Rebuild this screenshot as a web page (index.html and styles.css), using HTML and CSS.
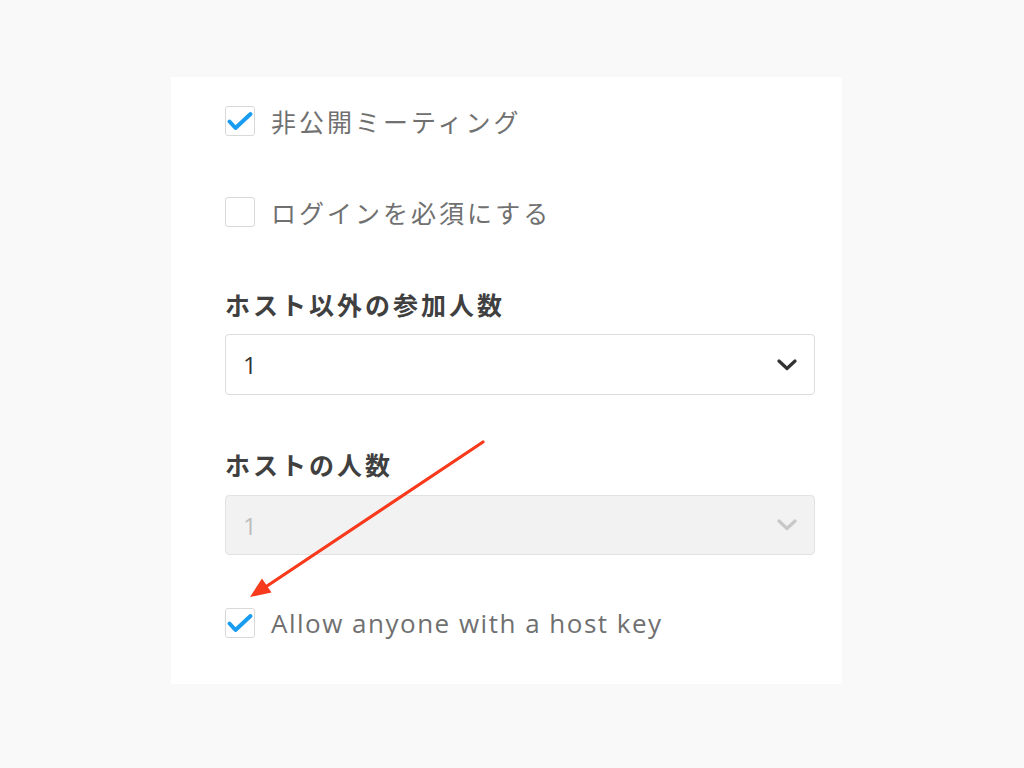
FILE: index.html
```html
<!DOCTYPE html>
<html lang="ja">
<head>
<meta charset="utf-8">
<title>Meeting settings</title>
<link rel="stylesheet" href="styles.css">
</head>
<body>
<div class="page">
  <div class="card">
    <div class="check-row first">
      <span class="box checked">
        <svg viewBox="0 0 30 30" width="30" height="30"><path d="M4.5 15.5 L10.5 22 L25.5 8" fill="none" stroke="#1a9cf0" stroke-width="4" stroke-linecap="round" stroke-linejoin="round"/></svg>
      </span>
      <span class="label">非公開ミーティング</span>
    </div>
    <div class="check-row second">
      <span class="box"></span>
      <span class="label">ログインを必須にする</span>
    </div>
    <div class="field f1">
      <div class="heading">ホスト以外の参加人数</div>
      <div class="select">
        <span class="value">1</span>
        <svg class="chev" viewBox="0 0 22 12" width="22" height="12"><path d="M3 2 L11 9.5 L19 2" fill="none" stroke="#333" stroke-width="3.2" stroke-linecap="round" stroke-linejoin="round"/></svg>
      </div>
    </div>
    <div class="field f2">
      <div class="heading">ホストの人数</div>
      <div class="select disabled">
        <span class="value">1</span>
        <svg class="chev" viewBox="0 0 22 12" width="22" height="12"><path d="M3 2 L11 9.5 L19 2" fill="none" stroke="#c8c8c8" stroke-width="3.2" stroke-linecap="round" stroke-linejoin="round"/></svg>
      </div>
    </div>
    <div class="check-row third">
      <span class="box checked">
        <svg viewBox="0 0 30 30" width="30" height="30"><path d="M4.5 15.5 L10.5 22 L25.5 8" fill="none" stroke="#1a9cf0" stroke-width="4" stroke-linecap="round" stroke-linejoin="round"/></svg>
      </span>
      <span class="label en">Allow anyone with a host key</span>
    </div>
    <svg class="arrow" width="1024" height="768" viewBox="0 0 1024 768">
      <line x1="483" y1="442" x2="264" y2="588" stroke="#f83a1c" stroke-width="3.2" stroke-linecap="round"/>
      <polygon points="250,597 262,578.5 271.5,592.5" fill="#f83a1c"/>
    </svg>
  </div>
</div>
</body>
</html>
```

FILE: styles.css
```css
html, body {
  margin: 0;
  padding: 0;
  background: #f9f9f9;
}
body {
  font-family: "Open Sans", "Noto Sans CJK JP", sans-serif;
}
.page {
  width: 1024px;
  height: 768px;
  padding-top: 77px;
  box-sizing: border-box;
}
.card {
  width: 671px;
  height: 607px;
  margin-left: 171px;
  background: #ffffff;
  box-sizing: border-box;
  padding: 29px 27px 0 54px;
  display: flex;
  flex-direction: column;
}
.check-row {
  display: flex;
  align-items: center;
  height: 30px;
}
.check-row.second { margin-top: 61px; }
.check-row.third { margin-top: 53px; }
.box {
  width: 30px;
  height: 30px;
  box-sizing: border-box;
  border: 1px solid #d9d9d9;
  border-radius: 3px;
  background: #fff;
  flex: none;
  position: relative;
}
.box svg {
  position: absolute;
  left: -1px;
  top: -1px;
}
.label {
  margin-left: 16px;
  font-family: "Noto Sans CJK JP", sans-serif;
  font-size: 25px;
  letter-spacing: 3px;
  color: #707070;
  line-height: 30px;
}
.label.en {
  font-family: "Open Sans", "Noto Sans CJK JP", sans-serif;
  font-size: 26px;
  letter-spacing: 1.5px;
}
.field.f1 { margin-top: 62px; }
.field.f2 { margin-top: 54px; }
.heading {
  font-family: "Noto Sans CJK JP", sans-serif;
  font-weight: 700;
  font-size: 25px;
  letter-spacing: 3px;
  color: #404040;
  line-height: 30px;
  height: 30px;
}
.select {
  margin-top: 15px;
  height: 61px;
  box-sizing: border-box;
  border: 1px solid #dcdcdc;
  border-radius: 4px;
  background: #fff;
  display: flex;
  align-items: center;
  justify-content: space-between;
  padding: 0 16px 0 17px;
}
.f2 .select {
  margin-top: 16px;
  height: 60px;
}
.select.disabled {
  background: #f2f2f2;
  border-color: #e2e2e2;
}
.value {
  font-family: "Open Sans", sans-serif;
  font-size: 24px;
  color: #333;
}
.select.disabled .value { color: #bdbdbd; }
.chev { flex: none; }
.arrow {
  position: absolute;
  left: 0;
  top: 0;
  pointer-events: none;
}
```
